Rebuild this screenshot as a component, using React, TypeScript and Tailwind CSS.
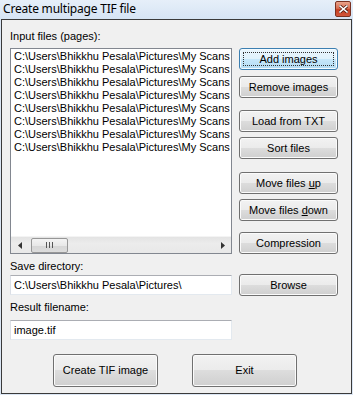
import React from "react";

const rows = Array.from({ length: 8 }, () => "C:\\Users\\Bhikkhu Pesala\\Pictures\\My Scans");

function Btn({ children, className = "", focused = false }: { children: React.ReactNode; className?: string; focused?: boolean }) {
  if (focused) {
    return (
      <div className={`relative flex items-center justify-center rounded-[3px] border border-[#3c7fb1] bg-[linear-gradient(#eaf6fd_0%,#e0f2fc_50%,#c7e8fb_50%,#b3dcf4_100%)] shadow-[inset_0_0_0_1px_#f4fbff] ${className}`}>
        <div className="absolute inset-[3px] border border-dotted border-[#333]" />
        <span className="relative">{children}</span>
      </div>
    );
  }
  return (
    <div className={`flex items-center justify-center rounded-[3px] border border-[#707070] bg-[linear-gradient(#f2f2f2_0%,#ebebeb_50%,#dddddd_50%,#cfcfcf_100%)] shadow-[inset_0_0_0_1px_#fbfbfb] ${className}`}>
      {children}
    </div>
  );
}

export default function App() {
  return (
    <div className="w-[353px] h-[395px] flex flex-col bg-[#dbe6f4] text-[11px] leading-[13px] text-black font-['Liberation_Sans',Arial,sans-serif] overflow-hidden">
      {/* Title bar */}
      <div className="h-[19px] flex items-start justify-between bg-[linear-gradient(#e6eff9,#d6e4f4)]">
        <div className="pl-[3px] pt-[2px] text-[12px] leading-[14px] font-['Noto_Sans','Liberation_Sans',sans-serif] tracking-[-0.2px]">
          Create multipage TIF file
        </div>
        <div className="mr-[2px] mt-[1px] w-[16px] h-[16px] rounded-[2px] border border-[#7a3222] bg-[linear-gradient(#e9a48c_0%,#d86e52_45%,#c43f22_55%,#d2573b_100%)] flex items-center justify-center">
          <svg width="9" height="8" viewBox="0 0 9 8">
            <path d="M1 1 L8 7 M8 1 L1 7" stroke="#4a1a10" strokeWidth="3" strokeLinecap="square" />
            <path d="M1 1 L8 7 M8 1 L1 7" stroke="#ffffff" strokeWidth="1.6" strokeLinecap="square" />
          </svg>
        </div>
      </div>

      {/* Client area */}
      <div className="mx-[1px] mb-[1px] flex-1 border border-[#3a3a3a] bg-[#f0f0f0] flex flex-col pl-[8px] pt-[10px]">
        <div className="h-[13px]">Input files (pages):</div>

        <div className="flex mt-[5px]">
          {/* Listbox */}
          <div className="w-[222px] h-[206px] border border-[#828790] bg-white flex flex-col">
            <div className="flex-1 pt-[1px] pl-[3px] overflow-hidden">
              {rows.map((r, i) => (
                <div key={i} className="h-[13px] whitespace-nowrap">
                  {r}
                </div>
              ))}
            </div>
            {/* Horizontal scrollbar */}
            <div className="h-[17px] flex items-center bg-[linear-gradient(#e3e3e3,#ececec_40%,#e8e8e8)] border-t border-[#f4f4f4]">
              <div className="w-[17px] h-full flex items-center justify-center">
                <svg width="4" height="7" viewBox="0 0 4 7">
                  <path d="M4 0 L0 3.5 L4 7 Z" fill="#333" />
                </svg>
              </div>
              <div className="ml-[3px] w-[37px] h-[15px] rounded-[2px] border border-[#979797] bg-[linear-gradient(#f3f3f3,#e8e8e8_50%,#d6d6d6_50%,#dcdcdc)] flex items-center justify-center gap-[2px]">
                <div className="w-[1px] h-[6px] bg-[#555]" />
                <div className="w-[1px] h-[6px] bg-[#555]" />
                <div className="w-[1px] h-[6px] bg-[#555]" />
              </div>
              <div className="flex-1" />
              <div className="w-[17px] h-full flex items-center justify-center">
                <svg width="4" height="7" viewBox="0 0 4 7">
                  <path d="M0 0 L4 3.5 L0 7 Z" fill="#333" />
                </svg>
              </div>
            </div>
          </div>

          {/* Right buttons */}
          <div className="ml-[7px] w-[99px] flex flex-col">
            <Btn focused className="h-[22px]">Add images</Btn>
            <Btn className="h-[22px] mt-[6px]">Remove images</Btn>
            <Btn className="h-[22px] mt-[12px]">Load from TXT</Btn>
            <Btn className="h-[22px] mt-[5px]">Sort files</Btn>
            <Btn className="h-[22px] mt-[13px]">
              <span>
                Move files <span className="underline underline-offset-[1px]">u</span>p
              </span>
            </Btn>
            <Btn className="h-[22px] mt-[5px]">
              <span>
                Move files <span className="underline underline-offset-[1px]">d</span>own
              </span>
            </Btn>
            <Btn className="h-[22px] mt-[11px]">Compression</Btn>
          </div>
        </div>

        <div className="h-[13px] mt-[6px]">Save directory:</div>
        <div className="flex items-center h-[22px] mt-[1px]">
          <div className="w-[222px] h-[20px] border border-[#abadb3] border-l-[#dbdfe6] border-r-[#e3e9ef] border-b-[#e3e9ef] bg-white pl-[3px] flex items-center">
            C:\Users\Bhikkhu Pesala\Pictures\
          </div>
          <Btn className="ml-[7px] w-[99px] h-[22px]">Browse</Btn>
        </div>

        <div className="h-[13px] mt-[5px]">Result filename:</div>
        <div className="w-[222px] h-[20px] mt-[6px] border border-[#abadb3] border-l-[#dbdfe6] border-r-[#e3e9ef] border-b-[#e3e9ef] bg-white pl-[3px] flex items-center">
          image.tif
        </div>

        <div className="flex mt-[14px] pl-[43px]">
          <Btn className="w-[105px] h-[33px]">Create TIF image</Btn>
          <Btn className="ml-[34px] w-[105px] h-[33px]">Exit</Btn>
        </div>
      </div>
    </div>
  );
}
